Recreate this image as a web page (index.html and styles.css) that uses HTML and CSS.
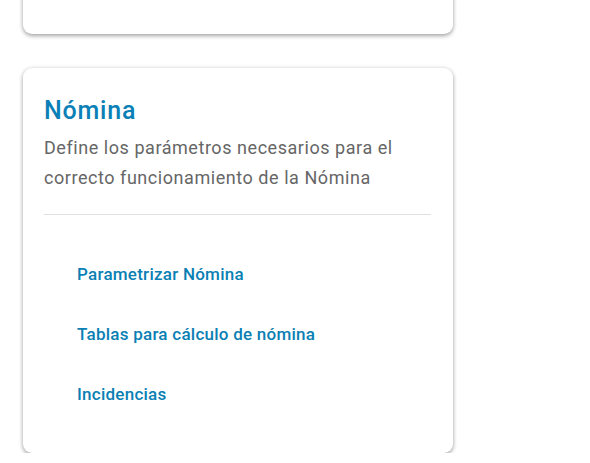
FILE: index.html
```html
<!DOCTYPE html>
<html lang="es">
<head>
<meta charset="utf-8">
<title>Nómina</title>
<link rel="stylesheet" href="styles.css">
</head>
<body>
<main class="page">
  <section class="card card-prev"></section>
  <section class="card">
    <h2 class="card-title">Nómina</h2>
    <p class="card-desc">Define los parámetros necesarios para el correcto funcionamiento de la Nómina</p>
    <hr class="divider">
    <ul class="links">
      <li><a class="link" href="#">Parametrizar Nómina</a></li>
      <li><a class="link" href="#">Tablas para cálculo de nómina</a></li>
      <li><a class="link" href="#">Incidencias</a></li>
    </ul>
  </section>
</main>
</body>
</html>
```
FILE: styles.css
```css
html, body {
  margin: 0;
  padding: 0;
  background: #ffffff;
}
body {
  font-family: Roboto, "Liberation Sans", sans-serif;
  overflow: hidden;
}
.page {
  display: flex;
  flex-direction: column;
  gap: 34px;
  padding: 0 0 0 23px;
  width: 430px;
}
.card {
  background: #ffffff;
  border-radius: 9px;
  box-shadow: 0 2px 4px rgba(0, 0, 0, 0.32), 0 0 4px rgba(0, 0, 0, 0.10);
  padding: 27px 22px 29px 21px;
  box-sizing: border-box;
}
.card-prev {
  height: 200px;
  margin-top: -166px;
}
.card-title {
  margin: 0;
  font-size: 25px;
  line-height: 32px;
  font-weight: 500;
  letter-spacing: 0.8px;
  color: #0a80b6;
}
.card-desc {
  margin: 6px 0 0 0;
  font-size: 18px;
  line-height: 30px;
  letter-spacing: 0.55px;
  color: #666666;
}
.divider {
  margin: 21px 0 0 0;
  border: 0;
  border-top: 1px solid #e0e0e0;
  height: 0;
}
.links {
  list-style: none;
  margin: 29px 0 0 0;
  padding: 0;
}
.links li {
  height: 60px;
  display: flex;
  align-items: center;
}
.link {
  padding-left: 33px;
  font-size: 17px;
  line-height: 20px;
  font-weight: 500;
  letter-spacing: 0.25px;
  color: #0a7fb4;
  text-decoration: none;
}
```
